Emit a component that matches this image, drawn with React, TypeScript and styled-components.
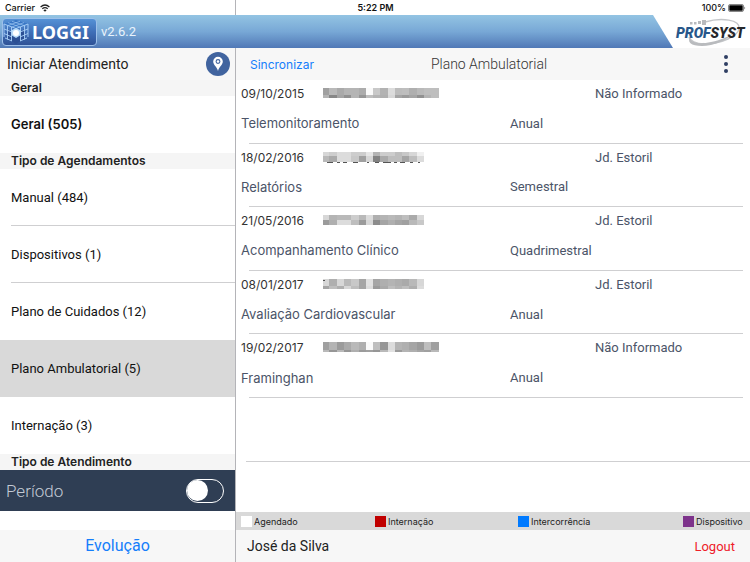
import React from "react";
import styled, { createGlobalStyle } from "styled-components";

const Global = createGlobalStyle`
  *, *::before, *::after { box-sizing: border-box; }
  body { margin: 0; background: #fff; color: #222; font-family: Inter, "Liberation Sans", sans-serif; font-size: 13px; }
  button { font: inherit; border: 0; padding: 0; background: none; cursor: pointer; }
  ul { list-style: none; margin: 0; padding: 0; }
  h1, h2, p { margin: 0; font-weight: 400; }
  svg { display: block; }
`;

const SIDE = "236px";
const LINE = "#b4b4b8";
const COMPACT = `Roboto, "Liberation Sans", sans-serif`;

const Page = styled.div`
  display: flex;
  flex-direction: column;
  min-height: 100vh;
`;

const StatusBar = styled.div`
  display: grid;
  grid-template-columns: 1fr auto 1fr;
  align-items: center;
  height: 15px;
  padding: 0 4px 0 5px;
  font-size: 9px;
  line-height: 15px;
  font-weight: 500;
  color: #111;
  background: linear-gradient(${LINE}, ${LINE}) 235px 0 / 1px 100% no-repeat;
`;

const StatusGroup = styled.div<{ $end?: boolean }>`
  display: flex;
  align-items: center;
  gap: ${(p) => (p.$end ? 2 : 5)}px;
  justify-content: ${(p) => (p.$end ? "flex-end" : "flex-start")};
`;

const Clock = styled.span`
  font-weight: 600;
`;

const Header = styled.header`
  display: flex;
  align-items: stretch;
  height: 33px;
`;

const Banner = styled.div`
  flex: 1;
  display: flex;
  align-items: center;
  gap: 4px;
  padding-left: 2px;
  color: #e9f3fc;
  font-family: ${COMPACT};
  background: linear-gradient(#93c4e3, #78a8d6 50%, #5078b6);
  clip-path: polygon(0 0, calc(100% - 20px) 0, 100% 100%, 0 100%);
`;

const Brand = styled.div`
  display: flex;
  align-items: center;
  gap: 3px;
  width: 95px;
  height: 28px;
  border: 1px solid #9dc0ea;
  border-radius: 4px;
  background: linear-gradient(#5592d6, #3f6fb8 50%, #2f5296);
  color: #fff;
  font-family: "Noto Sans", sans-serif;
  font-size: 18px;
  font-weight: 700;
  line-height: 26px;
`;

const Partner = styled.div`
  width: 77px;
  display: flex;
  align-items: center;
  justify-content: flex-end;
`;

const Body = styled.div`
  flex: 1;
  display: grid;
  grid-template-columns: ${SIDE} 1fr;
`;

const Sidebar = styled.aside`
  display: flex;
  flex-direction: column;
  border-right: 1px solid ${LINE};
`;

const SideTitle = styled.div`
  display: flex;
  align-items: center;
  justify-content: space-between;
  height: 32px;
  padding: 0 5px 0 7px;
  background: #f7f7f7;
  font-family: ${COMPACT};
  font-size: 14px;
`;

const PinButton = styled.button`
  display: grid;
  place-items: center;
  width: 24px;
  height: 24px;
  border-radius: 50%;
  background: #41649f;
`;

const SectionTitle = styled.h2`
  height: 16px;
  padding-left: 11px;
  background: #f5f5f5;
  font-size: 12px;
  line-height: 16px;
  font-weight: 600;
`;

const MenuItem = styled.li<{ $active?: boolean; $bold?: boolean; $line?: boolean }>`
  height: 57px;
  padding-left: 11px;
  background: ${(p) => (p.$active ? "#d9d9d9" : "#fff")};

  button {
    width: 100%;
    height: 100%;
    text-align: left;
    color: #111;
    font-family: ${(p) => (p.$bold ? "inherit" : COMPACT)};
    font-weight: ${(p) => (p.$bold ? 600 : 400)};
    border-bottom: 1px solid ${(p) => (p.$line ? "#cfcfd1" : "transparent")};
  }
`;

const Period = styled.label`
  display: flex;
  align-items: center;
  justify-content: space-between;
  height: 41px;
  padding: 0 11px 0 6px;
  background: #2f3e54;
  color: #c3cad5;
  font-family: ${COMPACT};
  font-size: 17px;
  font-weight: 300;
`;

const Switch = styled.input`
  appearance: none;
  display: flex;
  align-items: center;
  width: 38px;
  height: 24px;
  margin: 0;
  border: 1px solid #fff;
  border-radius: 12px;

  &::before {
    content: "";
    width: 21px;
    height: 21px;
    border-radius: 50%;
    background: #fff;
  }
  &:checked { justify-content: flex-end; background: #007aff; }
`;

const SideFooter = styled.footer`
  display: flex;
  justify-content: center;
  height: 32px;
  margin-top: auto;
  padding-bottom: 2px;
  background: #f7f7f7;
`;

const FooterAction = styled.button`
  color: #157efb;
  font-family: ${COMPACT};
  font-size: 16px;
`;

const Main = styled.main`
  display: flex;
  flex-direction: column;
  min-width: 0;
`;

const Toolbar = styled.div`
  display: grid;
  grid-template-columns: 1fr auto 1fr;
  align-items: center;
  height: 32px;
  padding: 0 22px 0 14px;
  background: #f7f7f7;
`;

const SyncButton = styled.button`
  justify-self: start;
  color: #157efb;
  font-size: 12px;
`;

const Heading = styled.h1`
  font-family: ${COMPACT};
  font-size: 14px;
  font-weight: 300;
  color: #333;
`;

const MoreButton = styled.button`
  justify-self: end;
`;

const Visits = styled.ul`
  display: grid;
  grid-auto-rows: 1fr;
  height: 318px;
  padding-left: 5px;
`;

const Visit = styled.li`
  display: grid;
  grid-template-columns: 82px 187px 85px 1fr;
  grid-template-rows: 27px 1fr;
  align-items: center;
  padding-bottom: 4px;
  color: #4b5468;
  background: linear-gradient(#cfcfd1, #cfcfd1) 8px 100% / calc(100% - 15px) 1px no-repeat;
`;

const VisitDate = styled.time`
  color: #333;
  font-size: 12px;
`;

const VisitKind = styled.span`
  grid-column: 1 / 3;
`;

const VisitDetail = styled.span`
  font-family: ${COMPACT};
`;

const EmptyRow = styled.div`
  height: 64px;
  margin-left: 10px;
  border-bottom: 1px solid #cfcfd1;
`;

const Legend = styled.ul`
  display: grid;
  grid-template-columns: 134fr 143fr 165fr 67fr;
  height: 18px;
  margin-top: auto;
  padding-left: 5px;
  background: #d9d9d9;
`;

const LegendItem = styled.li<{ $color: string }>`
  display: flex;
  align-items: center;
  gap: 2px;
  color: #222;
  font-size: 9px;

  &::before {
    content: "";
    width: 11px;
    height: 11px;
    background: ${(p) => p.$color};
  }
`;

const UserBar = styled.footer`
  display: flex;
  align-items: center;
  justify-content: space-between;
  height: 32px;
  padding: 0 15px 0 11px;
  background: #f7f7f7;
  font-family: ${COMPACT};
  font-size: 14px;
`;

const Logout = styled.button`
  color: #ee2029;
  font-size: 13px;
`;

const WifiIcon = () => (
  <svg width="10" height="8" viewBox="0 0 10 8" fill="none" stroke="#222" strokeWidth="1.3">
    <path d="M.6 3Q5-.9 9.4 3M2.3 4.8Q5 2.4 7.7 4.8" />
    <path d="M5 7.8 3.4 6.2Q5 4.9 6.6 6.2Z" fill="#222" stroke="none" />
  </svg>
);

const BatteryIcon = () => (
  <svg width="18" height="8" viewBox="0 0 18 8">
    <rect x=".5" y=".5" width="15" height="7" rx="1.5" fill="#fff" stroke="#555" strokeWidth=".7" />
    <rect x="1.3" y="1.3" width="13.4" height="5.4" rx=".6" fill="#000" />
    <path d="M16.500 2.600q1.400 1.400 0 2.800z" fill="#333" />
  </svg>
);

const CubeLogo = () => (
  <svg width="26" height="26" viewBox="0 0 26 26" fill="none" strokeLinejoin="round">
    <path d="M13 14 4 10v9l9 6zM13 14l9-4v9l-9 6z" fill="#2b4f94" />
    <path d="M1 5 13 1l12 4-12 5z" fill="#3675c4" />
    <g stroke="#a9d0f8" strokeWidth=".9">
      <path d="M1 5 13 9.500 25 5M1 10l8 3M1 14.500l8 3.500M2 19l7 3M24 19l-7 3M25 10l-8 3M25 14.500l-8 3.500" />
      <path d="M1 5v13M4.500 6.500v14M8.500 8v14M25 5v13M21.500 6.500v14M17.500 8v14" />
      <path d="M5 3.600 17 8M9 2.300 21 6.500M21 3.600 9 8M17 2.300 5 6.500" strokeWidth=".6" />
    </g>
    <path d="m13 9 4.500 2.300v5L13 19l-4.500-2.700v-5z" fill="#b9dcfa" />
    <circle cx="13" cy="14" r="3" fill="#fff" />
  </svg>
);

const PartnerLogo = () => (
  <svg width="76" height="32" viewBox="0 0 76 32">
    <path d="M31 6C48 1 66 4 65 12c0 8-18 16-35 16-8 0-14-3-15-7" fill="none" stroke="#c4c6c9" strokeWidth="1.4" />
    <path d="M17 20c-3 6 6 9 20 6 10-2 19-6 24-10-7 8-22 14-33 14-11 0-16-4-11-10z" fill="#b9bbbe" />
    <g fill="#b8babd">
      <rect x="16" y="6" width="2.5" height="2.5" />
      <rect x="20" y="6" width="2.5" height="2.5" />
      <rect x="24" y="5" width="3" height="3" />
      <rect x="28" y="4" width="4" height="5" />
    </g>
    <text x="2" y="22" fontFamily="Liberation Sans Narrow, Roboto, sans-serif" fontSize="14" fontWeight="900" fontStyle="italic" fill="#28578a">
      PROF<tspan fill="#26282c">SYST</tspan>
    </text>
  </svg>
);

const PinIcon = () => (
  <svg width="12" height="16" viewBox="0 0 12 16">
    <path d="M6 15C5 11 1.200 9 1.200 5.600a4.800 4.800 0 0 1 9.600 0C10.800 9 7 11 6 15z" fill="#fff" />
    <circle cx="6" cy="5.500" r="1.900" fill="#fff" stroke="#41649f" strokeWidth="1.100" />
  </svg>
);

const MoreIcon = () => (
  <svg width="4" height="18" viewBox="0 0 4 18" fill="#2f3e63">
    <circle cx="2" cy="2" r="2" />
    <circle cx="2" cy="9" r="2" />
    <circle cx="2" cy="16" r="2" />
  </svg>
);

type Mosaic = { first: number; rows: number[][]; marks?: string };

const XS = [0, 6, 14, 21, 28, 36, 43, 50, 57, 65, 72, 79, 86, 94, 101, 108, 116];

const MaskedName = ({ first, rows, marks }: Mosaic) => (
  <svg width="117" height="13" viewBox="0 0 117 13" role="img" aria-label="Nome oculto" shapeRendering="crispEdges">
    {rows.map((row, r) =>
      row.map((v, i) => (
        <rect
          key={`${r}-${i}`}
          x={XS[i]}
          y={r ? 1 + first : 1}
          width={XS[i + 1] - XS[i]}
          height={r ? 10 - first : first}
          fill={`rgb(${v},${v},${v})`}
        />
      ))
    )}
    {marks && <path d={marks} stroke="#555" strokeWidth="1" fill="none" />}
  </svg>
);

const visits: { date: string; kind: string; period: string; place: string; name: Mosaic }[] = [
  {
    date: "09/10/2015", kind: "Telemonitoramento", period: "Anual", place: "Não Informado",
    name: {
      first: 7,
      rows: [
        [160, 185, 170, 180, 180, 172, 250, 200, 178, 220, 188, 190, 175, 185, 190, 190],
        [180, 135, 165, 145, 180, 150, 190, 180, 175, 215, 165, 155, 165, 145, 180, 190],
      ],
    },
  },
  {
    date: "18/02/2016", kind: "Relatórios", period: "Semestral", place: "Jd. Estoril",
    name: {
      first: 4,
      rows: [
        [215, 205, 220, 220, 205, 205, 230, 180, 205, 205, 190, 200, 215, 240],
        [185, 170, 220, 220, 200, 160, 215, 130, 170, 190, 190, 165, 190, 220],
      ],
      marks: "M4 11.500h6M14 11.500h3M20 11.500h4M30 11.500h5M44 11.500h2M52 11.500h4M60 11.500h8M71 11.500h3M77 11.500h5M87 11.500h3M95 11.500h2",
    },
  },
  {
    date: "21/05/2016", kind: "Acompanhamento Clínico", period: "Quadrimestral", place: "Jd. Estoril",
    name: {
      first: 5,
      rows: [
        [215, 180, 185, 185, 205, 185, 220, 175, 180, 185, 180, 190, 170, 215],
        [155, 175, 220, 220, 190, 155, 215, 140, 165, 175, 165, 160, 185, 200],
      ],
    },
  },
  {
    date: "08/01/2017", kind: "Avaliação Cardiovascular", period: "Anual", place: "Jd. Estoril",
    name: {
      first: 7,
      rows: [
        [215, 175, 215, 185, 200, 165, 225, 165, 175, 180, 175, 170, 185, 215],
        [165, 190, 175, 215, 190, 165, 220, 155, 170, 190, 180, 190, 175, 220],
      ],
      marks: "M0 2.500h2",
    },
  },
  {
    date: "19/02/2017", kind: "Framinghan", period: "Anual", place: "Não Informado",
    name: {
      first: 8,
      rows: [
        [160, 180, 155, 170, 185, 175, 250, 190, 150, 220, 180, 175, 165, 155, 190, 160],
        [185, 150, 185, 150, 175, 155, 160, 150, 185, 225, 155, 180, 175, 165, 160, 185],
      ],
    },
  },
];

const agenda = ["Manual (484)", "Dispositivos (1)", "Plano de Cuidados (12)", "Plano Ambulatorial (5)", "Internação (3)"];

const legend = [
  { label: "Agendado", color: "#fff" },
  { label: "Internação", color: "#c00000" },
  { label: "Intercorrência", color: "#007aff" },
  { label: "Dispositivo", color: "#7d338b" },
];

export default function App() {
  return (
    <Page>
      <Global />
      <StatusBar>
        <StatusGroup>Carrier <WifiIcon /></StatusGroup>
        <Clock>5:22 PM</Clock>
        <StatusGroup $end>100% <BatteryIcon /></StatusGroup>
      </StatusBar>
      <Header>
        <Banner>
          <Brand><CubeLogo />LOGGI</Brand>
          <span>v2.6.2</span>
        </Banner>
        <Partner><PartnerLogo /></Partner>
      </Header>
      <Body>
        <Sidebar>
          <SideTitle>
            Iniciar Atendimento
            <PinButton aria-label="Localização"><PinIcon /></PinButton>
          </SideTitle>
          <SectionTitle>Geral</SectionTitle>
          <ul>
            <MenuItem $bold><button>Geral (505)</button></MenuItem>
          </ul>
          <SectionTitle>Tipo de Agendamentos</SectionTitle>
          <ul>
            {agenda.map((label, i) => (
              <MenuItem key={label} $active={i === 3} $line={i < 2}><button>{label}</button></MenuItem>
            ))}
          </ul>
          <SectionTitle>Tipo de Atendimento</SectionTitle>
          <Period>
            Período
            <Switch type="checkbox" role="switch" />
          </Period>
          <SideFooter><FooterAction>Evolução</FooterAction></SideFooter>
        </Sidebar>
        <Main>
          <Toolbar>
            <SyncButton>Sincronizar</SyncButton>
            <Heading>Plano Ambulatorial</Heading>
            <MoreButton aria-label="Mais opções"><MoreIcon /></MoreButton>
          </Toolbar>
          <Visits>
            {visits.map((v) => (
              <Visit key={v.date}>
                <VisitDate>{v.date}</VisitDate>
                <MaskedName {...v.name} />
                <span />
                <VisitDetail>{v.place}</VisitDetail>
                <VisitKind>{v.kind}</VisitKind>
                <VisitDetail>{v.period}</VisitDetail>
              </Visit>
            ))}
          </Visits>
          <EmptyRow />
          <Legend>
            {legend.map((l) => <LegendItem key={l.label} $color={l.color}>{l.label}</LegendItem>)}
          </Legend>
          <UserBar>
            José da Silva
            <Logout>Logout</Logout>
          </UserBar>
        </Main>
      </Body>
    </Page>
  );
}
